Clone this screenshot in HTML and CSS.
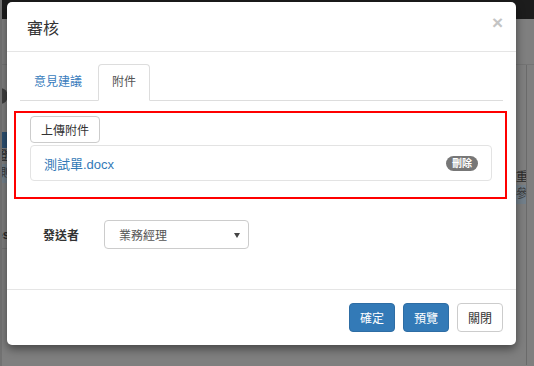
FILE: index.html
```html
<!DOCTYPE html>
<html lang="zh-Hant">

<head>
    <meta charset="UTF-8">
    <title>審核</title>
    <link rel="stylesheet" href="styles.css">
</head>

<body>
    <div id="page">
        <div class="topbar"></div>
        <div class="page-head"></div>
        <div class="page-body">
            <div class="side-left">
                <div class="dot"></div>
                <div class="blue-row"></div>
                <div class="txt-row">證</div>
                <div class="grey-row">測</div>
                <div class="txt-row es">es</div>
            </div>
            <div class="side-right">
                <div class="side-col">
                    <div class="txt-row">重</div>
                    <div class="grey-row">參</div>
                </div>
            </div>
        </div>
    </div>

    <div id="modal">
        <div class="modal-header">
            <h4 class="modal-title">審核</h4>
            <span class="close">×</span>
        </div>
        <div class="modal-body">
            <ul class="nav-tabs">
                <li class="tab"><a>意見建議</a></li>
                <li class="tab active"><a>附件</a></li>
            </ul>
            <div class="mark-box">
                <button class="btn btn-default btn-upload">上傳附件</button>
                <div class="file-item">
                    <a class="file-name">測試單.docx</a>
                    <span class="badge">刪除</span>
                </div>
            </div>
            <div class="form-row">
                <label class="form-label">發送者</label>
                <div class="select">
                    <span>業務經理</span>
                    <i class="caret"></i>
                </div>
            </div>
        </div>
        <div class="modal-footer">
            <button class="btn btn-primary">確定</button>
            <button class="btn btn-primary">預覽</button>
            <button class="btn btn-default">關閉</button>
        </div>
    </div>
</body>

</html>
```

FILE: styles.css
```css
* {
    padding: 0;
    margin: 0;
    box-sizing: border-box;
}

body {
    width: 534px;
    height: 366px;
    overflow: hidden;
    position: relative;
    background: #7f7f7f;
    font-family: "Liberation Sans", "Noto Sans CJK TC", sans-serif;
    font-size: 12px;
    color: #333;
}

/* page behind the backdrop */
#page {
    height: 366px;
    border-left: 2px solid #727272;
}

.topbar {
    height: 19px;
    background: #1c1c1c;
}

.page-head {
    height: 46px;
    border-bottom: 1px solid #747474;
}

.page-body {
    display: flex;
    justify-content: space-between;
    height: 300px;
}

.side-left {
    width: 6px;
    overflow: hidden;
}

.dot {
    width: 16px;
    height: 16px;
    margin: 23px 0 0 -10px;
    border-radius: 50%;
    background: #3f3f3f;
}

.blue-row {
    height: 16px;
    margin-top: 28px;
    background: #2c5072;
}

.txt-row {
    height: 16px;
    line-height: 16px;
    color: #2a2a2a;
    white-space: nowrap;
}

.side-left .txt-row {
    margin-left: -6px;
}

.grey-row {
    height: 19px;
    line-height: 19px;
    background: #73808b;
    color: #3a3a3a;
    white-space: nowrap;
}

.side-left .grey-row {
    margin-left: -6px;
    padding-left: 2px;
}

.es {
    margin-top: 44px;
    height: 22px;
    border-bottom: 1px solid #737373;
    font-weight: bold;
}

.side-right {
    width: 18px;
    overflow: hidden;
}

.side-col {
    width: 11px;
    height: 100%;
    padding-top: 104px;
    overflow: hidden;
    border-right: 1px solid #6a6a6a;
}

/* modal */
#modal {
    position: absolute;
    left: 7px;
    top: 2px;
    width: 509px;
    background: #fff;
    border-radius: 5px;
    box-shadow: 0 4px 10px rgba(0, 0, 0, .45);
}

.modal-header {
    height: 50px;
    padding: 0 13px 0 20px;
    display: flex;
    align-items: center;
    justify-content: space-between;
    border-bottom: 1px solid #e5e5e5;
}

.modal-title {
    font-size: 16px;
    font-weight: normal;
    color: #333;
}

.close {
    font-size: 19px;
    font-weight: bold;
    color: #c4c4c4;
    margin-top: -8px;
}

.modal-body {
    padding: 12px 13px 40px;
}

.nav-tabs {
    list-style: none;
    display: flex;
    border-bottom: 1px solid #ddd;
}

.tab {
    margin-right: 2px;
    margin-bottom: -1px;
}

.tab a {
    display: block;
    padding: 9px 13px;
    line-height: 17px;
    border: 1px solid transparent;
    border-radius: 4px 4px 0 0;
    color: #3a7dbd;
}

.tab.active a {
    color: #555;
    background: #fff;
    border-color: #ddd;
    border-bottom-color: transparent;
}

.mark-box {
    margin: 10px -4px 0 -6px;
    padding: 3px 13px 16px 14px;
    border: 2px solid #ff0000;
}

.btn {
    font-family: inherit;
    font-size: 12px;
    height: 29px;
    width: 46px;
    border: 1px solid #ccc;
    border-radius: 4px;
    background: #fff;
    color: #333;
}

.btn-primary {
    background: #337ab7;
    border-color: #2e6da4;
    color: #fff;
}

.btn-upload {
    display: block;
    width: 70px;
    height: 27px;
}

.file-item {
    margin-top: 2px;
    height: 36px;
    padding: 0 13px 0 13px;
    display: flex;
    align-items: center;
    justify-content: space-between;
    border: 1px solid #e3e3e3;
    border-radius: 4px;
}

.file-name {
    color: #337ab7;
    font-size: 13px;
}

.badge {
    height: 15px;
    line-height: 15px;
    padding: 0 6px;
    border-radius: 8px;
    background: #777;
    color: #fff;
    font-size: 10px;
    font-weight: bold;
}

.form-row {
    margin-top: 21px;
    display: flex;
    align-items: center;
}

.form-label {
    margin-left: 23px;
    width: 61px;
    font-weight: bold;
    font-size: 12px;
}

.select {
    width: 145px;
    height: 29px;
    padding: 0 8px 0 14px;
    display: flex;
    align-items: center;
    justify-content: space-between;
    border: 1px solid #ccc;
    border-radius: 4px;
    color: #555;
}

.caret {
    width: 0;
    height: 0;
    border-left: 3px solid transparent;
    border-right: 3px solid transparent;
    border-top: 5px solid #444;
    margin-top: 1px;
}

.modal-footer {
    padding: 13px;
    display: flex;
    justify-content: flex-end;
    gap: 8px;
    border-top: 1px solid #e5e5e5;
}
```
